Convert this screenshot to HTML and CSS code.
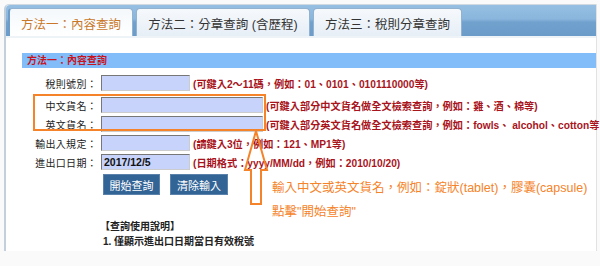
FILE: index.html
```html
<!DOCTYPE html>
<html lang="zh-Hant">
<head>
<meta charset="utf-8">
<link rel="stylesheet" href="styles.css">
</head>
<body>
<div class="frame">
  <div class="tabbar">
    <div class="tab active t1">方法一：內容查詢</div>
    <div class="tab t2">方法二：分章查詢 (含歷程)</div>
    <div class="tab t3">方法三：稅則分章查詢</div>
  </div>
  <div class="panel">
    <div class="panel-title">方法一：內容查詢</div>
    <div class="form">
      <div class="row">
        <span class="label">稅則號別：</span><input class="field short" value=""><span class="hint">(可鍵入2～11碼，例如：01、0101、0101110000等)</span>
      </div>
      <div class="row r2">
        <span class="label">中文貨名：</span><input class="field long" value=""><span class="hint">(可鍵入部分中文貨名做全文檢索查詢，例如：雞、酒、棉等)</span>
      </div>
      <div class="row">
        <span class="label">英文貨名：</span><input class="field long" value=""><span class="hint">(可鍵入部分英文貨名做全文檢索查詢，例如：fowls、 alcohol、cotton等</span>
      </div>
      <div class="row">
        <span class="label">輸出入規定：</span><input class="field short" value=""><span class="hint">(請鍵入3位，例如：121、MP1等)</span>
      </div>
      <div class="row">
        <span class="label">進出口日期：</span><input class="field short" value="2017/12/5"><span class="hint">(日期格式：yyyy/MM/dd，例如：2010/10/20)</span>
      </div>
    </div>
    <div class="buttons">
      <button class="btn">開始查詢</button>
      <button class="btn">清除輸入</button>
    </div>
    <div class="notes">
      <div class="note-title">【查詢使用說明】</div>
      <div class="note-item">1. 僅顯示進出口日期當日有效稅號</div>
    </div>

    <div class="highlight"></div>
    <svg class="arrow" width="26" height="76" viewBox="0 0 26 76">
      <path d="M13 1 L24 40 L18 40 L18 74 L8 74 L8 40 L2 40 Z" fill="none" stroke="#f5832a" stroke-width="2" stroke-linejoin="miter"/>
    </svg>
    <div class="annotation">
      <div>輸入中文或英文貨名，例如：錠狀(tablet)，膠囊(capsule)</div>
      <div>點擊"開始查詢"</div>
    </div>
  </div>
</div>
</body>
</html>
```

FILE: styles.css
```css
html, body {
  margin: 0;
  padding: 0;
  background: #fafafa;
}
body {
  font-family: "Liberation Sans", "Noto Sans CJK TC", sans-serif;
  width: 600px;
  height: 266px;
  overflow: hidden;
}
.frame {
  margin: 4px 0 0 4px;
  width: 590px;
  height: 246px;
  background: #fff;
  border-left: 2px solid #c3d0dc;
  border-right: 1px solid #e2e2e2;
  border-top: 1px solid #d0d8e0;
  border-radius: 5px 0 0 0;
}
.tabbar {
  height: 33px;
  display: flex;
  align-items: flex-end;
  gap: 3px;
  padding-left: 2px;
  box-sizing: border-box;
  border-radius: 4px 0 0 0;
  background: linear-gradient(to bottom, #96bfe2 0%, #8ab6dd 45%, #71a1cd 55%, #6b9bc9 100%);
  border-bottom: 2px solid #eef3f8;
}
.tab {
  height: 28px;
  box-sizing: border-box;
  border: 1px solid #93b2cf;
  border-bottom: none;
  border-radius: 4px 4px 0 0;
  background: linear-gradient(to bottom, #f6f9fc, #e6eef6);
  display: flex;
  align-items: center;
  justify-content: center;
  font-size: 12.5px;
  color: #333;
  padding-top: 2px;
}
.tab.active {
  color: #c9782a;
  background: linear-gradient(to bottom, #f4f8fb, #ffffff);
  border-left: 2px solid #6d9cc8;
}
.t1 { width: 125px; }
.t2 { width: 174px; }
.t3 { width: 149px; }

.panel {
  position: relative;
  height: 208px;
  padding-top: 15px;
}
.panel-title {
  margin: 0 0 0 16px;
  height: 15px;
  background: #82bdf9;
  color: #c8141e;
  font-weight: bold;
  font-size: 10px;
  line-height: 15px;
  padding-left: 5px;
}
.form {
  margin-top: 7px;
  display: flex;
  flex-direction: column;
  gap: 3px;
}
.row {
  display: flex;
  align-items: center;
  height: 16px;
  white-space: nowrap;
}
.row.r2 { margin-top: 3px; }
.label {
  width: 91px;
  text-align: right;
  font-size: 10px;
  color: #222;
  flex: none;
  letter-spacing: 0.3px;
}
.field {
  margin: 0 0 0 4px;
  height: 16px;
  box-sizing: border-box;
  border: 1px solid #777;
  border-right-color: #ccc;
  border-bottom-color: #ccc;
  background: #c8d3fb;
  padding: 0 2px;
  font-family: "Liberation Sans", sans-serif;
  font-size: 10.5px;
  font-weight: bold;
  color: #111;
  flex: none;
}
.field.short { width: 89px; }
.field.long { width: 162px; }
.hint {
  margin-left: 3px;
  color: #a8141c;
  font-size: 10.2px;
  font-weight: bold;
}
.buttons {
  margin: 4px 0 0 97px;
  display: flex;
  gap: 10px;
}
.btn {
  width: 57px;
  height: 21px;
  margin: 0;
  padding: 0;
  border: 1px solid #5a82aa;
  background: #336496;
  color: #fff;
  font-family: "Liberation Sans", "Noto Sans CJK TC", sans-serif;
  font-size: 11px;
}
.btn + .btn { width: 58px; }
.notes {
  margin: 23px 0 0 94px;
  font-size: 10px;
  color: #222;
  font-weight: bold;
}
.note-title { height: 15px; }
.note-item { margin-left: 3px; height: 15px; }

.highlight {
  position: absolute;
  left: 27px;
  top: 56px;
  width: 229px;
  height: 33px;
  border: 2px solid #f5832a;
}
.arrow {
  position: absolute;
  left: 237px;
  top: 92px;
}
.annotation {
  position: absolute;
  left: 266px;
  top: 138px;
  color: #f5832a;
  font-size: 12.5px;
  line-height: 24px;
  white-space: nowrap;
}
```
